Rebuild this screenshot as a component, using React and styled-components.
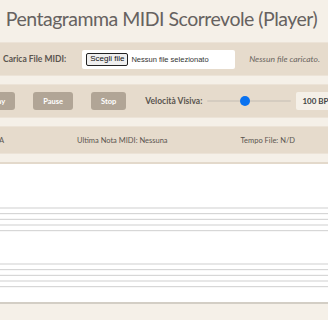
import React, { useState } from "react";
import styled, { createGlobalStyle } from "styled-components";

const GlobalStyle = createGlobalStyle`
  body {
    margin: 0;
    background-color: #f5f0e8;
    overflow: hidden;
    font-family: Lato, "Open Sans", sans-serif;
  }
`;

const Page = styled.div`
  display: flex;
  justify-content: center;
  width: 100%;
`;

const Main = styled.div`
  flex: none;
  width: 443px;
  margin-right: 5px;
  display: flex;
  flex-direction: column;
`;

const Title = styled.h1`
  margin: 0;
  height: 42px;
  font-size: 19.5px;
  font-weight: 400;
  letter-spacing: -0.5px;
  line-height: 37px;
  color: #666260;
  text-align: center;
  white-space: nowrap;
`;

const Panel = styled.div`
  display: flex;
  align-items: center;
  justify-content: ${(p) => p.$justify || "center"};
  gap: ${(p) => p.$gap || 0}px;
  height: ${(p) => p.$height}px;
  padding: 0 ${(p) => p.$padRight || 0}px 0 0;
  box-sizing: border-box;
  background-color: #e6dbcc;
  border: 1px solid #ece3d7;
  margin-bottom: 8px;
  white-space: nowrap;
`;

const Label = styled.span`
  font-size: 8.5px;
  font-weight: 700;
  color: #5a554f;
`;

const FileBox = styled.div`
  display: flex;
  align-items: center;
  gap: 3px;
  width: 153px;
  height: 19px;
  margin: 0 1px;
  padding-left: 4px;
  box-sizing: border-box;
  background-color: #fff;
  border-radius: 2px;
`;

const FileButton = styled.button`
  font-family: "Liberation Sans", Arial, sans-serif;
  font-size: 8px;
  color: #111;
  background-color: #efefef;
  border: 1.5px solid #222;
  border-radius: 2px;
  padding: 0 3px;
  height: 13px;
  line-height: 10px;
`;

const FileText = styled.span`
  font-family: "Liberation Sans", Arial, sans-serif;
  font-size: 7.5px;
  color: #333;
`;

const Status = styled.span`
  font-size: 8.5px;
  font-style: italic;
  color: #6a655f;
  margin-left: -2px;
`;

const Button = styled.button`
  height: 18px;
  padding: 0 10px;
  border: none;
  border-radius: 3px;
  background-color: #b1a596;
  color: #fff;
  font-family: Lato, sans-serif;
  font-size: 7.5px;
  font-weight: 700;
`;

const ButtonGroup = styled.div`
  display: flex;
  gap: 18px;
`;

const Slider = styled.input`
  -webkit-appearance: none;
  appearance: none;
  width: 84px;
  height: 2px;
  margin: 0;
  background: #d5ccc0;
  border-radius: 1px;
  outline: none;

  &::-webkit-slider-thumb {
    -webkit-appearance: none;
    width: 10px;
    height: 10px;
    border-radius: 50%;
    background: #0a72f0;
    border: none;
  }
`;

const SpeedGroup = styled.div`
  display: flex;
  align-items: center;
  gap: 5px;
`;

const Bpm = styled.span`
  display: inline-flex;
  align-items: center;
  height: 18px;
  padding: 0 6px;
  background-color: #f5f0e8;
  border-radius: 2px;
  font-size: 8px;
  font-weight: 700;
  color: #444;
`;

const Info = styled.span`
  font-size: 7.5px;
  color: #5a554f;
`;

const Staff = styled.div`
  height: 142px;
  background-color: #fff;
  border-top: 2px solid #e3d9cb;
  border-bottom: 2px solid #d3cec5;
  box-sizing: border-box;
`;

const staffTops = [44, 100];

const App = () => {
  const [speed, setSpeed] = useState(100);

  return (
    <>
      <GlobalStyle />
      <Page>
        <Main>
          <Title>Pentagramma MIDI Scorrevole (Player)</Title>

          <Panel $height={34} $gap={15}>
            <Label>Carica File MIDI:</Label>
            <FileBox>
              <FileButton>Scegli file</FileButton>
              <FileText>Nessun file selezionato</FileText>
            </FileBox>
            <Status>Nessun file caricato.</Status>
          </Panel>

          <Panel $height={34} $gap={19}>
            <ButtonGroup>
              <Button>Play</Button>
              <Button>Pause</Button>
              <Button>Stop</Button>
            </ButtonGroup>
            <SpeedGroup>
              <Label>Velocità Visiva:</Label>
              <Slider
                type="range"
                min="20"
                max="200"
                value={speed}
                onChange={(e) => setSpeed(e.target.value)}
              />
              <Bpm>{speed} BPM</Bpm>
            </SpeedGroup>
          </Panel>

          <Panel $height={28} $gap={73} $justify="flex-end" $padRight={87}>
            <Info>Nota Corrente: N/A</Info>
            <Info>Ultima Nota MIDI: Nessuna</Info>
            <Info>Tempo File: N/D</Info>
          </Panel>

          <Staff>
            <svg width="100%" height="138">
              {staffTops.map((top) =>
                [0, 1, 2, 3, 4].map((i) => (
                  <line
                    key={`${top}-${i}`}
                    x1="0"
                    x2="100%"
                    y1={top + i * 5.67}
                    y2={top + i * 5.67}
                    stroke="#cfcfcf"
                    strokeWidth="1"
                  />
                ))
              )}
            </svg>
          </Staff>
        </Main>
      </Page>
    </>
  );
};

export default App;
